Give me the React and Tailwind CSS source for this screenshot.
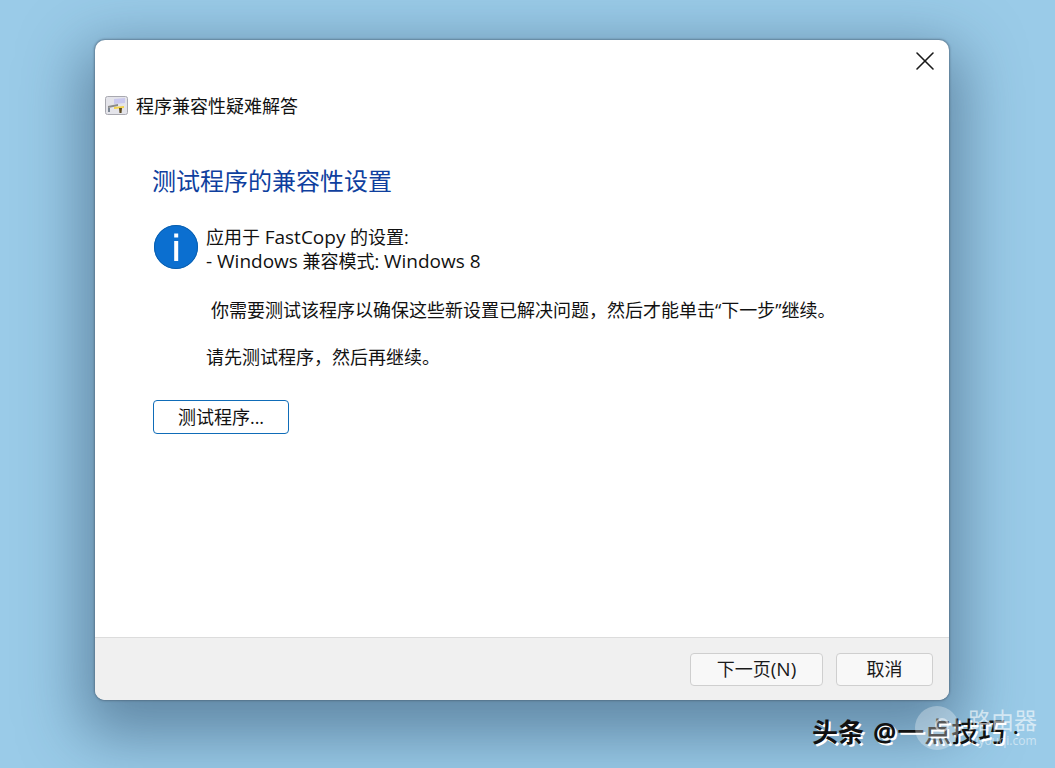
import { X } from "lucide-react";

const font = { fontFamily: '"Open Sans", "Noto Sans CJK SC", sans-serif' };

function TroubleshooterIcon() {
	return (
		<svg width="23" height="19" viewBox="0 0 23 19" className="shrink-0">
			<rect x="0.5" y="0.5" width="22" height="18" rx="2" fill="#e4e4ea" stroke="#a9a9b0" />
			<path d="M9 3 L20 2 L20 7 L9 8 Z" fill="#c9c8ee" />
			<path d="M3 10 L13 8 L13 10 L3 12 Z" fill="#8a8a8a" />
			<path d="M3 12 L3 16 L5 16 L5 12 Z" fill="#7c8794" />
			<path d="M9 11 L19 10 L19 12 L9 13 Z" fill="#f2d24a" />
			<path d="M14 12 L17 12 L16.5 17 L14.5 17 Z" fill="#5b4a22" />
		</svg>
	);
}

function InfoIcon() {
	return (
		<svg width="44" height="44" viewBox="0 0 44 44" className="shrink-0">
			<circle cx="22" cy="22" r="22" fill="#0b6fd0" />
			<circle cx="22" cy="22" r="21.5" fill="none" stroke="#0a5fae" />
			<rect x="20.2" y="8.5" width="4" height="4" fill="#ffffff" />
			<rect x="20.2" y="16" width="4" height="20" fill="#ffffff" />
		</svg>
	);
}

function FooterButton({ children, width }) {
	return (
		<button className={`flex h-[33px] items-center justify-center rounded-[4px] border border-[#cfcfcf] bg-[#f8f8f8] text-[18px] text-[#1a1a1a] ${width}`}>
			{children}
		</button>
	);
}

function Latin({ children }) {
	return <span className="text-[19px]">{children}</span>;
}

function Watermark() {
	return (
		<>
			<div className="absolute left-[812px] top-[714px] flex items-center whitespace-nowrap leading-[36px] text-[#111] [text-shadow:2px_2px_0_#fff]">
				<span className="text-[26px] font-bold">头条</span>
				<span className="ml-[9px] text-[26px] font-bold">@</span>
				<span className="ml-[1px] text-[27px] font-medium">一点技巧</span>
				<span className="ml-[8px] text-[18px] font-bold">·</span>
			</div>
			<div className="absolute left-[915px] top-[706px] flex h-[44px] w-[44px] items-center justify-center rounded-full bg-white/30">
				<div className="mb-[6px] ml-[10px] h-[14px] w-[14px] rounded-full border-2 border-white/50" />
			</div>
			<div className="absolute left-[968px] top-[705px] text-[23px] leading-[30px] text-white/60">路由器</div>
			<div className="absolute left-[968px] top-[732px] text-[12px] leading-[18px] text-white/50">luyouqi.com</div>
		</>
	);
}

export default function App() {
	return (
		<div className="relative h-[768px] w-[1055px] overflow-hidden bg-[#9acbe8] pl-[95px] pt-[40px]" style={font}>
			<div className="flex h-[660px] w-[854px] flex-col overflow-hidden rounded-[10px] bg-white shadow-[0_0_2px_1px_rgba(70,90,110,0.55),0_22px_60px_14px_rgba(40,70,100,0.5)]">
				<div className="flex h-[41px] shrink-0 items-center justify-end pr-[8px]">
					<X size={32} strokeWidth={1.2} className="text-[#1a1a1a]" />
				</div>

				<div className="flex h-[49px] shrink-0 items-center gap-[8px] pl-[10px]">
					<TroubleshooterIcon />
					<span className="text-[18px] leading-[24px] text-[#111]">程序兼容性疑难解答</span>
				</div>

				<div className="flex-1 pl-[57px] pt-[34px] text-[18px] leading-[24px] text-[#111]">
					<h1 className="text-[24px] font-normal leading-[34px] text-[#0f3f9e]">测试程序的兼容性设置</h1>

					<div className="mt-[27px] flex gap-[8px] pl-[2px]">
						<InfoIcon />
						<div>
							<p>应用于 <Latin>FastCopy</Latin> 的设置:</p>
							<p><Latin>- Windows</Latin> 兼容模式: <Latin>Windows 8</Latin></p>
						</div>
					</div>

					<p className="mt-[25px] pl-[59px]">你需要测试该程序以确保这些新设置已解决问题，然后才能单击“下一步”继续。</p>
					<p className="mt-[23px] pl-[54px]">请先测试程序，然后再继续。</p>

					<button className="ml-[1px] mt-[31px] flex h-[34px] w-[136px] items-center justify-center rounded-[4px] border border-[#0f6cb8] bg-white text-[18px] text-[#111]">
						测试程序...
					</button>
				</div>

				<div className="flex h-[63px] shrink-0 items-center justify-end gap-[13px] border-t border-[#dcdcdc] bg-[#f0f0f0] pr-[16px]">
					<FooterButton width="w-[133px]">下一页<Latin>(N)</Latin></FooterButton>
					<FooterButton width="w-[97px]">取消</FooterButton>
				</div>
			</div>
			<Watermark />
		</div>
	);
}
